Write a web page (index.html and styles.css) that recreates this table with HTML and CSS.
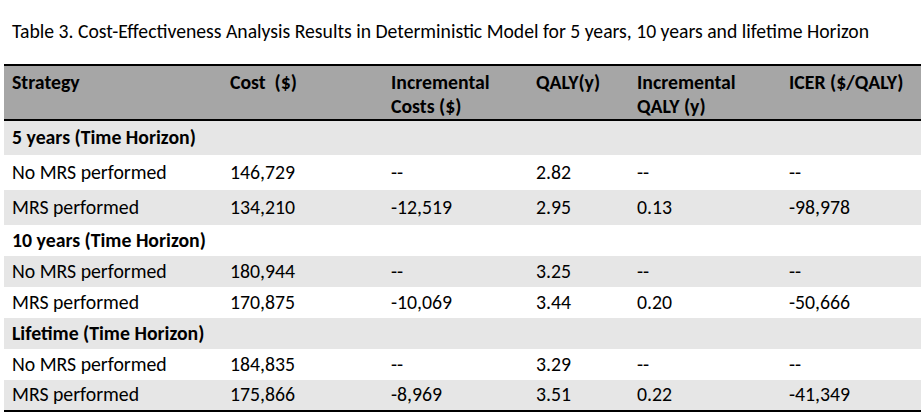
FILE: index.html
```html
<!DOCTYPE html>
<html lang="en">
<head>
<meta charset="utf-8">
<title>Table 3</title>
<link rel="stylesheet" href="styles.css">
</head>
<body>
<p class="caption">Table 3. Cost-Effectiveness Analysis Results in Deterministic Model for 5 years, 10 years and lifetime Horizon</p>
<table class="results">
  <colgroup>
    <col class="c1"><col class="c2"><col class="c3"><col class="c4"><col class="c5"><col class="c6">
  </colgroup>
  <thead>
    <tr>
      <th>Strategy</th>
      <th>Cost&nbsp; ($)</th>
      <th>Incremental<br>Costs ($)</th>
      <th>QALY(y)</th>
      <th>Incremental<br>QALY (y)</th>
      <th>ICER ($/QALY)</th>
    </tr>
  </thead>
  <tbody>
    <tr class="group shade tall"><td colspan="6">5 years (Time Horizon)</td></tr>
    <tr class="tall"><td>No MRS performed</td><td>146,729</td><td>--</td><td>2.82</td><td>--</td><td>--</td></tr>
    <tr class="shade tall"><td>MRS performed</td><td>134,210</td><td>-12,519</td><td>2.95</td><td>0.13</td><td>-98,978</td></tr>
    <tr class="group"><td colspan="6">10 years (Time Horizon)</td></tr>
    <tr class="shade"><td>No MRS performed</td><td>180,944</td><td>--</td><td>3.25</td><td>--</td><td>--</td></tr>
    <tr><td>MRS performed</td><td>170,875</td><td>-10,069</td><td>3.44</td><td>0.20</td><td>-50,666</td></tr>
    <tr class="group shade"><td colspan="6">Lifetime (Time Horizon)</td></tr>
    <tr><td>No MRS performed</td><td>184,835</td><td>--</td><td>3.29</td><td>--</td><td>--</td></tr>
    <tr class="shade last"><td>MRS performed</td><td>175,866</td><td>-8,969</td><td>3.51</td><td>0.22</td><td>-41,349</td></tr>
  </tbody>
</table>
</body>
</html>
```
FILE: styles.css
```css
html, body {
  margin: 0;
  padding: 0;
  background: #ffffff;
}
body {
  font-family: Carlito, Calibri, Lato, "Liberation Sans", sans-serif;
  color: #000000;
  font-size: 19.8px;
}
.caption {
  margin: 0;
  padding: 19px 0 0 12px;
  height: 64px;
  box-sizing: border-box;
  font-size: 19.7px;
  line-height: 24px;
  white-space: nowrap;
}
.results {
  margin-left: 4px;
  width: 917px;
  border-collapse: collapse;
  table-layout: fixed;
}
.c1 { width: 218px; }
.c2 { width: 161px; }
.c3 { width: 145px; }
.c4 { width: 101px; }
.c5 { width: 152px; }
.c6 { width: 140px; }
.results thead tr {
  background: #a6a6a6;
  border-top: 2px solid #000;
  border-bottom: 2px solid #000;
  height: 55px;
}
.results th {
  text-align: left;
  vertical-align: top;
  font-weight: bold;
  padding: 4px 0 0 8px;
  line-height: 24px;
}
.results td {
  padding: 0 0 2px 8px;
  vertical-align: middle;
  line-height: 24px;
  white-space: nowrap;
}
.results tbody tr { height: 31px; }
.results tbody tr.tall { height: 35px; }
.results tr.shade { background: #e6e6e6; }
.results tr.group td { font-weight: bold; }
.results tr.last { border-bottom: 2px solid #000; }
```
